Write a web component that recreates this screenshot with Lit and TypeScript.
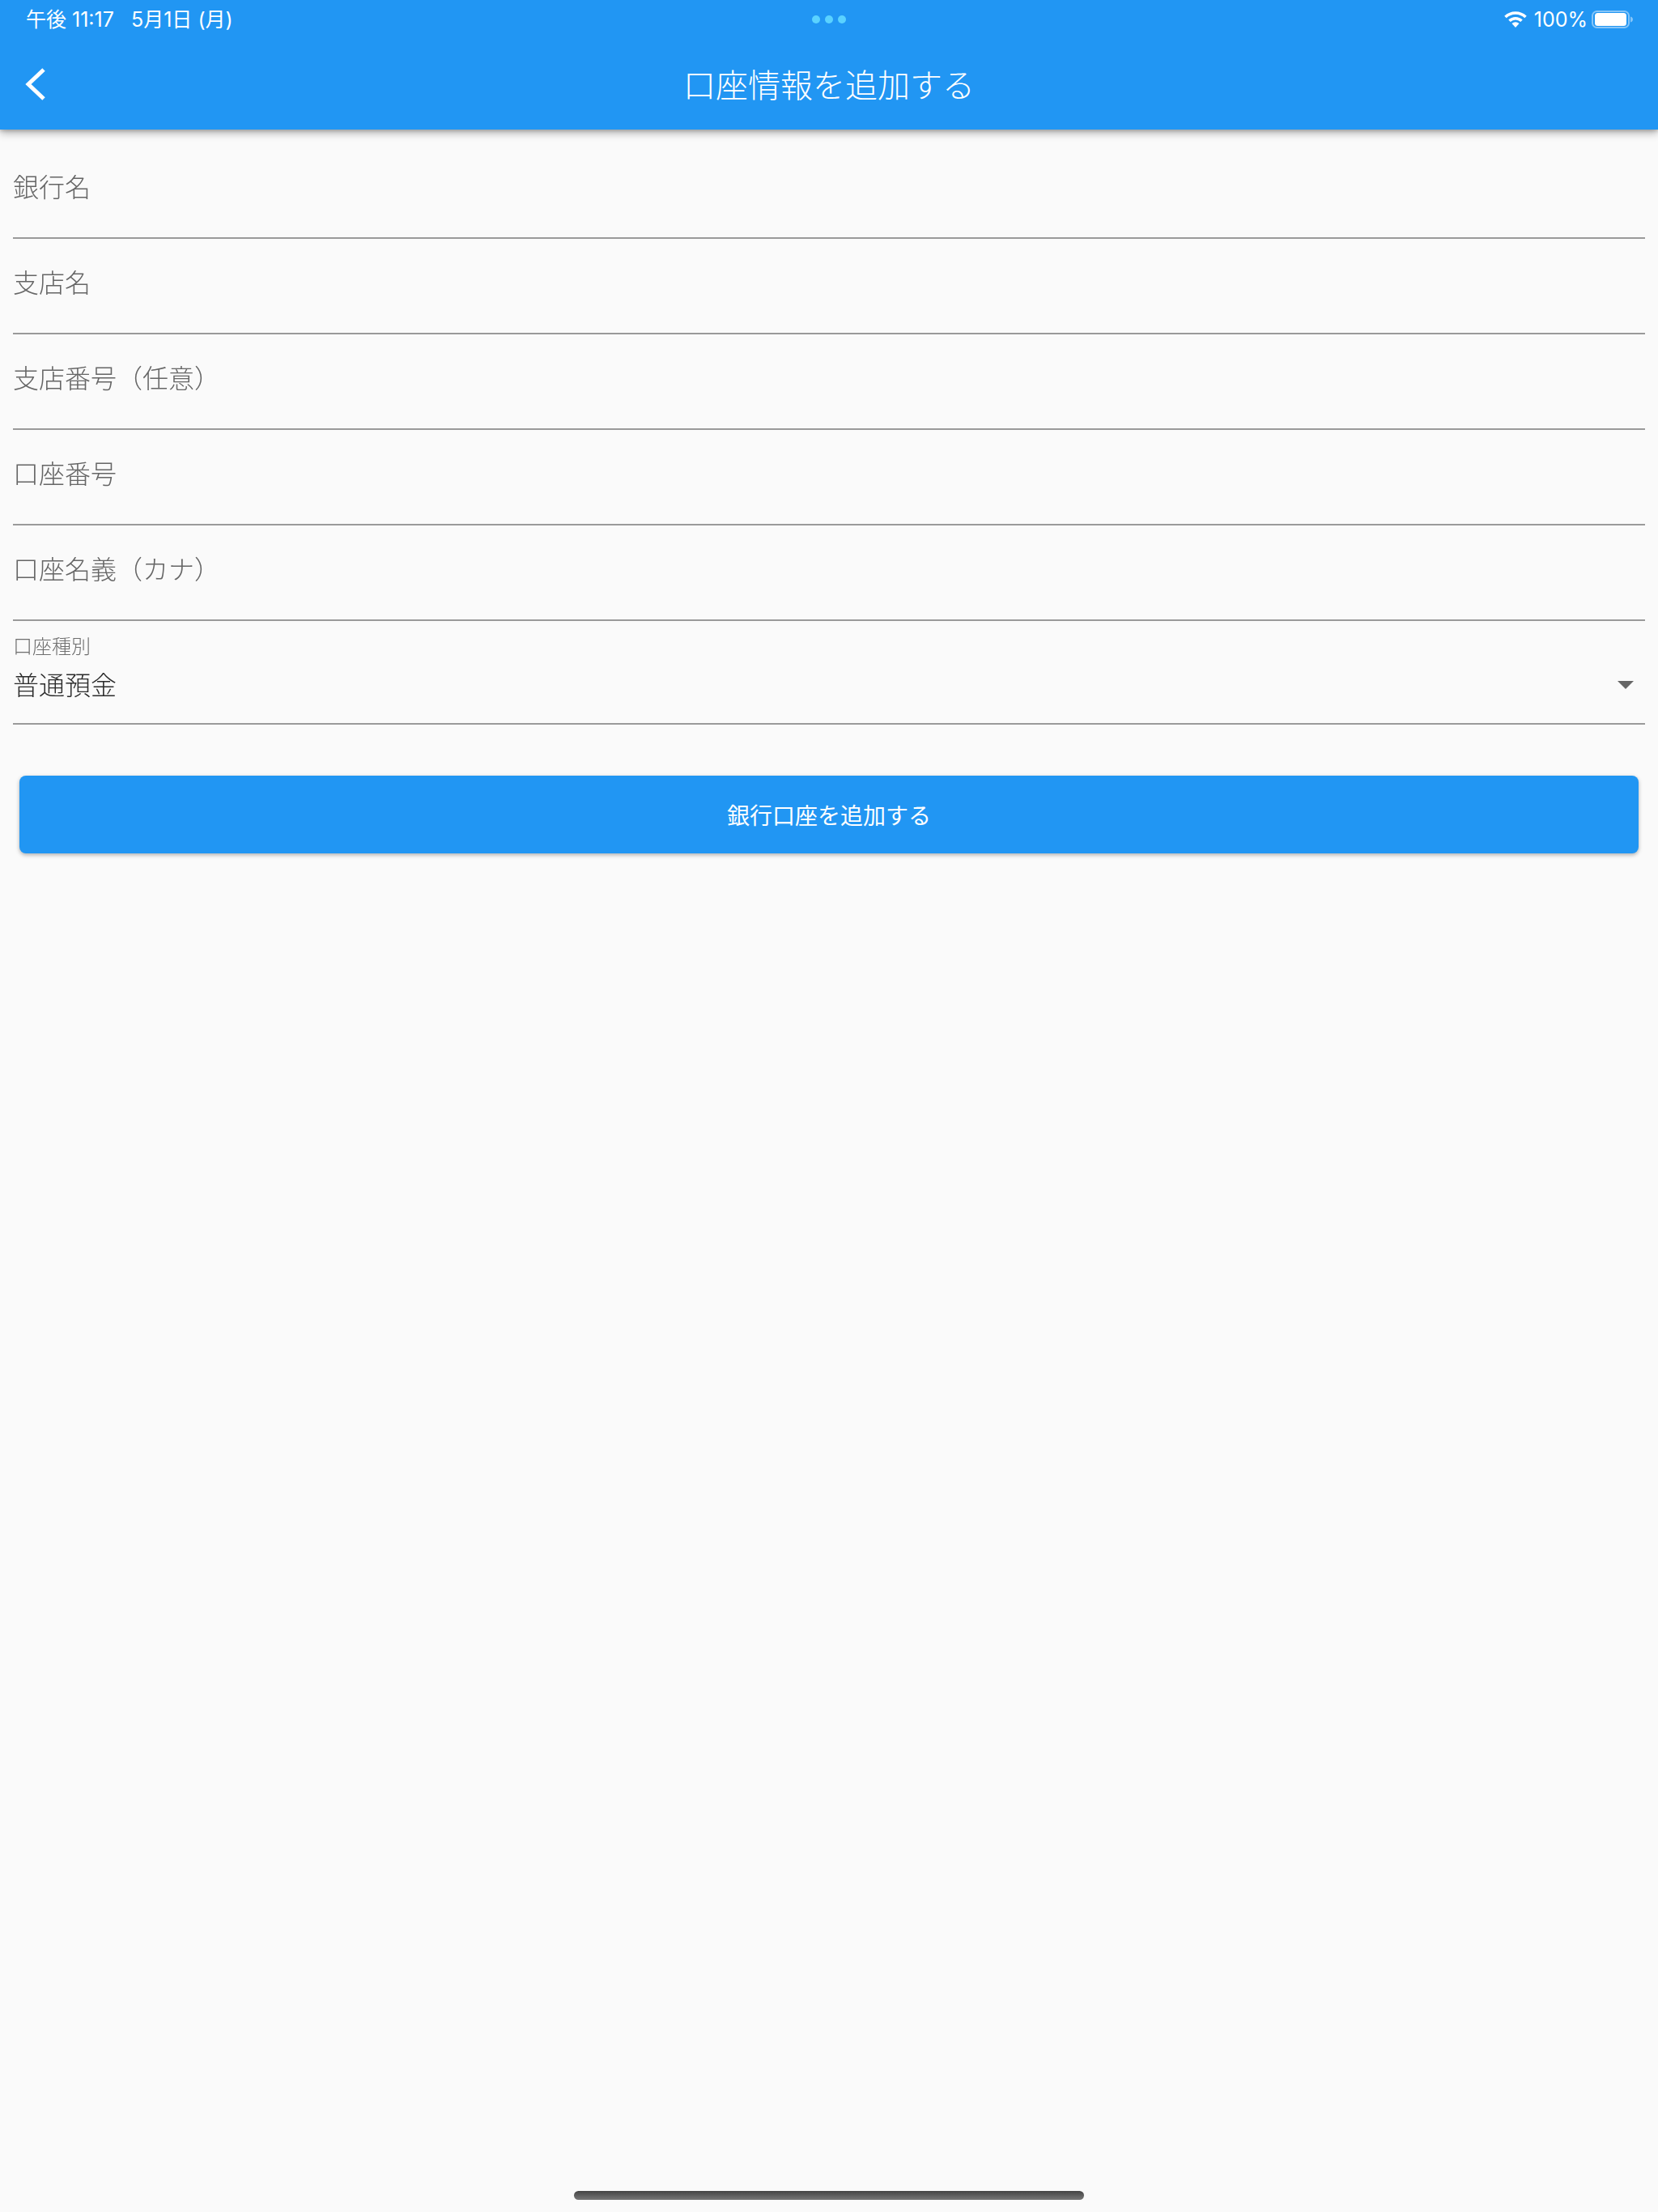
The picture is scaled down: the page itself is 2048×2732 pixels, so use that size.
import { html, css, LitElement } from 'lit';
import { customElement } from 'lit/decorators.js';

const FIELDS = ['銀行名', '支店名', '支店番号（任意）', '口座番号', '口座名義（カナ）'];

@customElement('app-root')
export class AppRoot extends LitElement {
  static styles = css`
    :host {
      display: block;
      position: relative;
      width: 2048px;
      height: 2732px;
      background: #fafafa;
      overflow: hidden;
      font-family: "Noto Sans CJK JP", "Inter", sans-serif;
      color: #666;
    }

    .header {
      position: relative;
      height: 160px;
      background: #2196f3;
      color: #fff;
      box-shadow: 0 4px 10px rgba(0, 0, 0, .3), 0 2px 4px rgba(0, 0, 0, .15);
    }

    .status {
      display: grid;
      grid-template-columns: 1fr auto 1fr;
      align-items: center;
      height: 48px;
      padding: 0 30px 0 32px;
      font-family: "Inter", "Noto Sans CJK JP", sans-serif;
      font-size: 25px;
      line-height: 48px;
    }

    .time {
      white-space: pre;
    }

    .dots {
      display: flex;
      gap: 6px;
      margin-left: -2px;
    }

    .dots i {
      width: 10px;
      height: 10px;
      border-radius: 50%;
      background: #5ad2ff;
    }

    .right {
      display: flex;
      justify-content: flex-end;
      align-items: center;
    }

    .wifi {
      width: 30px;
      height: 22px;
      margin-right: 8px;
    }

    .battery {
      width: 54px;
      height: 24px;
      margin-left: 3px;
    }

    .bar {
      display: grid;
      grid-template-columns: 1fr auto 1fr;
      align-items: center;
      height: 112px;
    }

    .back {
      width: 28px;
      height: 42px;
      margin: 0 0 0 30px;
    }

    .title {
      font-size: 40px;
      font-weight: 300;
      line-height: 48px;
      margin-bottom: 2px;
      white-space: nowrap;
    }

    .form {
      padding: 0 16px;
      will-change: opacity;
    }

    .field {
      box-sizing: border-box;
      height: 118px;
      border-bottom: 2px solid #9a9a9a;
      padding-top: 30px;
      font-size: 32px;
      font-weight: 300;
      line-height: 44px;
      white-space: nowrap;
    }

    .field:first-child {
      height: 135px;
      padding-top: 47px;
    }

    .select {
      box-sizing: border-box;
      height: 128px;
      border-bottom: 2px solid #9a9a9a;
      padding-top: 14px;
    }

    .select label {
      display: block;
      font-size: 24px;
      font-weight: 300;
      line-height: 32px;
      color: #6e6e6e;
    }

    .value {
      display: flex;
      justify-content: space-between;
      align-items: center;
      height: 50px;
      margin-top: 6px;
      font-size: 32px;
      font-weight: 300;
      color: #2b2b2b;
    }

    .arrow {
      width: 20px;
      height: 10px;
      margin: 4px 14px 0 0;
    }

    .button {
      display: flex;
      justify-content: center;
      align-items: center;
      height: 96px;
      margin: 63px 24px 0;
      border-radius: 8px;
      background: #2196f3;
      color: #fff;
      font-size: 28px;
      font-weight: 400;
      box-shadow: 0 2px 5px rgba(0, 0, 0, .3);
    }

    .home {
      position: absolute;
      left: 709px;
      top: 2706px;
      width: 630px;
      height: 11px;
      border-radius: 6px;
      background: linear-gradient(#444, #777);
    }
  `;

  render() {
    return html`
      <div class="header">
        <div class="status">
          <span class="time">午後 11:17   5月1日 (月)</span>
          <div class="dots"><i></i><i></i><i></i></div>
          <div class="right">
            <svg class="wifi" viewBox="0 0 30 22">
              <path d="M15 21l-4.500-4.900a6.500 6.500 0 0 1 9 0z" fill="#fff"/>
              <path d="M2.500 8a18 18 0 0 1 25 0M7.500 12.800a10.800 10.800 0 0 1 15 0" fill="none" stroke="#fff" stroke-width="3.600"/>
            </svg>
            <span>100%</span>
            <svg class="battery" viewBox="0 0 54 24">
              <rect x="3" y="2" width="45" height="20" rx="5.500" fill="none" stroke="#fff" stroke-opacity=".45" stroke-width="2"/>
              <rect x="6" y="4" width="39" height="16" rx="3.500" fill="#fff"/>
              <path d="M50 8.500c1.800.5 3 1.800 3 3.500s-1.200 3-3 3.500z" fill="#fff" fill-opacity=".45"/>
            </svg>
          </div>
        </div>
        <div class="bar">
          <svg class="back" viewBox="0 0 28 42">
            <path d="M24 3L5 21l19 18" fill="none" stroke="#fff" stroke-width="5"/>
          </svg>
          <div class="title">口座情報を追加する</div>
        </div>
      </div>
      <div class="form">
        ${FIELDS.map((label) => html`<div class="field">${label}</div>`)}
        <div class="select">
          <label>口座種別</label>
          <div class="value">
            <span>普通預金</span>
            <svg class="arrow" viewBox="0 0 20 10"><path d="M0 0h20L10 10z" fill="#666"/></svg>
          </div>
        </div>
      </div>
      <div class="button">銀行口座を追加する</div>
      <div class="home"></div>
    `;
  }
}
